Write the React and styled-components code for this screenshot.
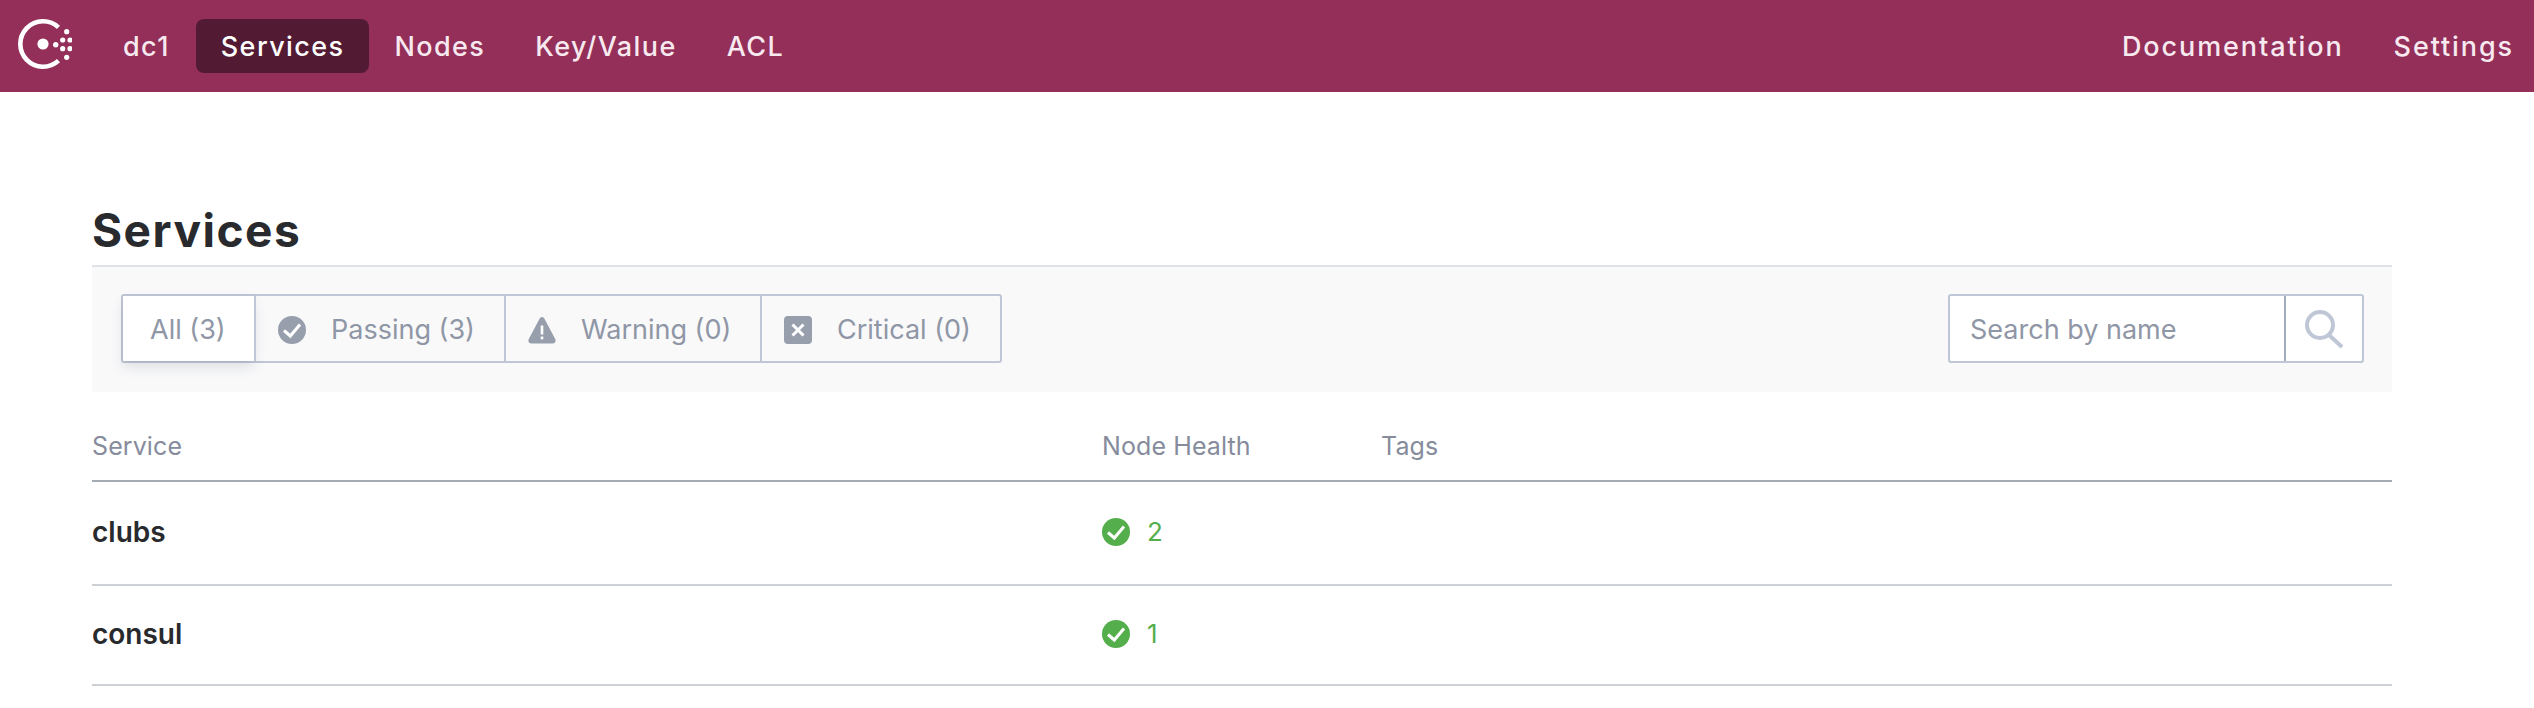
import React from "react";
import styled, { createGlobalStyle } from "styled-components";

const GlobalStyle = createGlobalStyle`
  html, body {
    margin: 0;
    background: #fff;
    font-family: Inter, "Liberation Sans", sans-serif;
  }
  * { box-sizing: border-box; }
`;

// HEADER
const Header = styled.header`
  height: 92px;
  background: #932f59;
  display: flex;
  align-items: center;
  justify-content: space-between;
  padding: 0 0 0 18px;
`;

const NavGroup = styled.nav`
  display: flex;
  align-items: center;
`;

const SideNav = styled(NavGroup)`
  gap: 10px;
  a {
    padding: 0 20px;
    letter-spacing: 1.9px;
  }
`;

const NavItem = styled.a`
  height: 54px;
  display: flex;
  align-items: center;
  padding: 0 25px;
  border-radius: 8px;
  font-size: 27px;
  font-weight: 500;
  letter-spacing: 1.4px;
  color: ${(p) => (p.$active ? "#fff" : "#f7e9ef")};
  background: ${(p) => (p.$active ? "#521b33" : "transparent")};
`;

const LogoWrap = styled.div`
  width: 54px;
  height: 54px;
  margin-right: 26px;
  svg { display: block; }
`;

const DcItem = styled(NavItem)`
  padding-right: 26px;
`;

// PAGE
const Main = styled.main`
  padding: 0 142px 0 92px;
`;

const Title = styled.h1`
  margin: 0;
  padding-top: 110px;
  height: 173px;
  font-size: 46px;
  line-height: 56px;
  font-weight: 700;
  letter-spacing: 1.5px;
  color: #282a2d;
`;

const Toolbar = styled.div`
  height: 127px;
  background: #f9f9fa;
  border-top: 2px solid #dfe2e8;
  display: flex;
  align-items: flex-start;
  justify-content: space-between;
  padding: 27px 28px 0 29px;
`;

const Filters = styled.div`
  display: flex;
  height: 69px;
  border: 2px solid #bfc6d5;
  border-radius: 3px;
`;

const Filter = styled.div`
  display: flex;
  align-items: center;
  height: 100%;
  width: ${(p) => p.$width}px;
  padding: 2px 0 0 ${(p) => (p.$active ? 27 : 22)}px;
  gap: 25px;
  font-size: 27px;
  color: #8f96a6;
  background: ${(p) => (p.$active ? "#fff" : "transparent")};
  box-shadow: ${(p) => (p.$active ? "0 6px 12px rgba(60, 70, 90, 0.14)" : "none")};
  & + & { border-left: 2px solid #bfc6d5; }
  svg { flex: none; display: block; }
`;

const Search = styled.div`
  display: flex;
  width: 416px;
  height: 69px;
  background: #fff;
  border: 2px solid #bfc6d5;
  border-radius: 3px;
`;

const SearchInput = styled.input`
  flex: 1;
  min-width: 0;
  border: 0;
  outline: 0;
  background: transparent;
  padding: 2px 0 0 20px;
  font-family: inherit;
  font-size: 27px;
  color: #282a2d;
  &::placeholder { color: #8f96a6; opacity: 1; }
`;

const SearchButton = styled.div`
  width: 78px;
  border-left: 2px solid #a3acbd;
  display: flex;
  align-items: center;
  justify-content: center;
`;

// TABLE
const Row = styled.div`
  display: grid;
  grid-template-columns: 1010px 279px 1fr;
  align-items: center;
  height: ${(p) => p.$height}px;
  padding-bottom: 3px;
  border-bottom: 2px solid ${(p) => (p.$head ? "#a4abb3" : "#cdd0d4")};
`;

const HeadRow = styled(Row)`
  padding: 20px 0 0;
`;

const HeadCell = styled.div`
  font-size: 25px;
  letter-spacing: 0.1px;
  color: #868c9c;
`;

const Name = styled.div`
  font-size: 28px;
  font-weight: 600;
  color: #282a2d;
`;

const Health = styled.div`
  display: flex;
  align-items: center;
  gap: 17px;
  font-size: 26px;
  color: #54ae4c;
  svg { display: block; }
`;

const Logo = () => (
  <svg width="54" height="54" viewBox="0 0 54 54" fill="#fff">
    <path d="M40.5 8.4 A22.7 22.7 0 1 0 40.5 41.6" fill="none" stroke="#fff" strokeWidth="4.6" />
    <circle cx="25" cy="25" r="5.6" />
    <circle cx="37.7" cy="25.7" r="2.7" />
    <circle cx="48.7" cy="12.7" r="2.6" />
    <circle cx="44.7" cy="21" r="2.6" />
    <circle cx="52" cy="21" r="2.6" />
    <circle cx="44.7" cy="29.7" r="2.6" />
    <circle cx="52" cy="29.7" r="2.6" />
    <circle cx="48.7" cy="38.3" r="2.6" />
  </svg>
);

const CheckIcon = ({ color, size }) => (
  <svg width={size} height={size} viewBox="0 0 28 28">
    <circle cx="14" cy="14" r="14" fill={color} />
    <path d="M6 14.5 L12.3 20 L22 8.5" fill="none" stroke="#fff" strokeWidth="3" />
  </svg>
);

const WarningIcon = () => (
  <svg width="28" height="28" viewBox="0 0 28 28">
    <path
      d="M14 1 C15.2 1 16 1.8 16.6 3 L27.2 23 C28.4 25.4 27 27.5 24.6 27.5 L3.4 27.5 C1 27.5 -0.4 25.4 0.8 23 L11.4 3 C12 1.8 12.8 1 14 1 Z"
      fill="#979fac"
    />
    <rect x="12.7" y="9.5" width="2.6" height="9" fill="#fff" />
    <rect x="12.7" y="20.5" width="2.6" height="2.8" fill="#fff" />
  </svg>
);

const CriticalIcon = () => (
  <svg width="28" height="28" viewBox="0 0 28 28">
    <rect width="28" height="28" rx="4" fill="#979fac" />
    <path d="M8.5 8.5 L19.5 19.5 M19.5 8.5 L8.5 19.5" stroke="#fff" strokeWidth="3" />
  </svg>
);

const SearchIcon = () => (
  <svg width="42" height="40" viewBox="0 0 42 40" fill="none" stroke="#bfc6d5">
    <circle cx="17" cy="16" r="13" strokeWidth="4" />
    <path d="M26 26 L39 38" strokeWidth="4" />
  </svg>
);

const services = [
  { name: "clubs", health: 2, height: 104 },
  { name: "consul", health: 1, height: 100 },
];

const App = () => {
  return (
    <>
      <GlobalStyle />
      <Header>
        <NavGroup>
          <LogoWrap>
            <Logo />
          </LogoWrap>
          <DcItem>dc1</DcItem>
          <NavItem $active>Services</NavItem>
          <NavItem>Nodes</NavItem>
          <NavItem>Key/Value</NavItem>
          <NavItem>ACL</NavItem>
        </NavGroup>
        <SideNav>
          <NavItem>Documentation</NavItem>
          <NavItem>Settings</NavItem>
        </SideNav>
      </Header>
      <Main>
        <Title>Services</Title>
        <Toolbar>
          <Filters>
            <Filter $active $width={131}>All (3)</Filter>
            <Filter $width={250}>
              <CheckIcon color="#979fac" size={28} />
              Passing (3)
            </Filter>
            <Filter $width={256}>
              <WarningIcon />
              Warning (0)
            </Filter>
            <Filter $width={240}>
              <CriticalIcon />
              Critical (0)
            </Filter>
          </Filters>
          <Search>
            <SearchInput placeholder="Search by name" />
            <SearchButton>
              <SearchIcon />
            </SearchButton>
          </Search>
        </Toolbar>
        <HeadRow $head $height={90}>
          <HeadCell>Service</HeadCell>
          <HeadCell>Node Health</HeadCell>
          <HeadCell>Tags</HeadCell>
        </HeadRow>
        {services.map((s) => (
          <Row key={s.name} $height={s.height}>
            <Name>{s.name}</Name>
            <Health>
              <CheckIcon color="#54ae4c" size={28} />
              {s.health}
            </Health>
            <div />
          </Row>
        ))}
      </Main>
    </>
  );
};

export default App;
